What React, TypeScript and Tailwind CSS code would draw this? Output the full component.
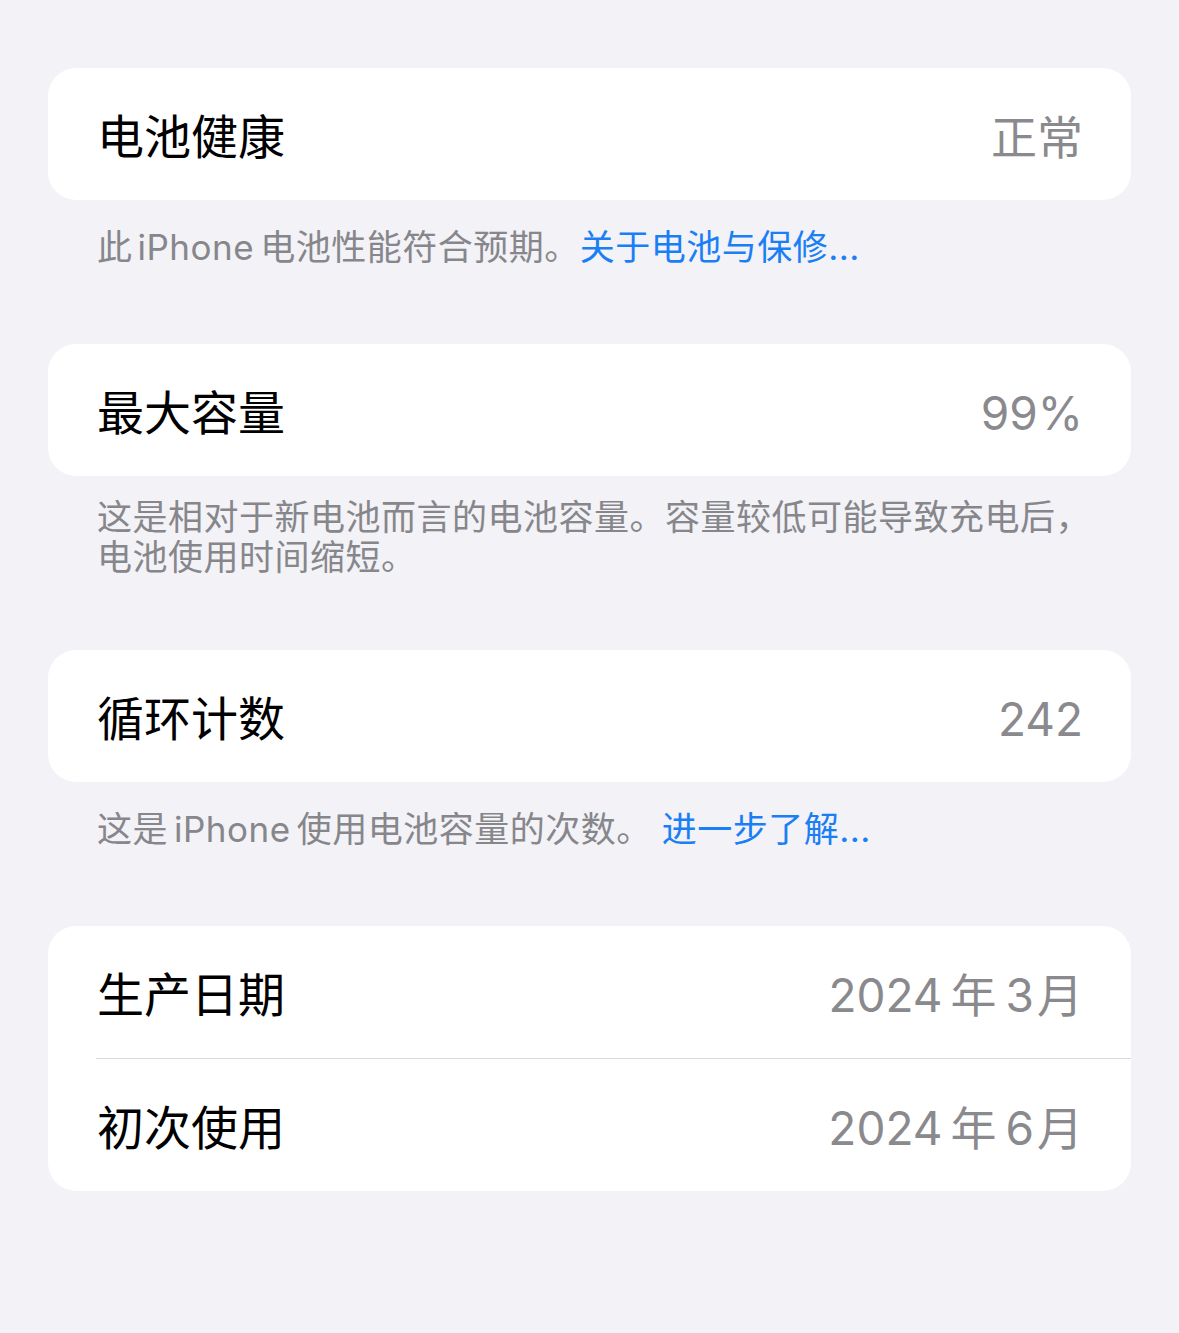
const font = { fontFamily: '"Inter", "Noto Sans CJK SC", sans-serif' };

function Row({ label, value }: { label: React.ReactNode; value: React.ReactNode }) {
  return (
    <div className="flex h-[132px] items-center justify-between pl-[49px] pr-[48px] pt-[5px]">
      <span className="text-[47px] leading-none text-black">{label}</span>
      <span className="text-[46px] leading-none text-[#8a8a8e]">{value}</span>
    </div>
  );
}

function DateValue({ month }: { month: string }) {
  return (
    <span>
      2024<span className="ml-[8px]">年</span>
      <span className="ml-[9px]">{month}</span>
      <span className="ml-[3px]">月</span>
    </span>
  );
}

export default function App() {
  return (
    <div className="min-h-[1333px] bg-[#f2f2f7] px-[48px] pt-[68px]" style={font}>
      <div className="rounded-[28px] bg-white">
        <Row label="电池健康" value="正常" />
      </div>
      <p className="pl-[49px] pt-[27px] text-[35px] leading-[40px] tracking-[0.5px] text-[#86868b]">
        此<span className="ml-[5px]">iPhone</span>
        <span className="ml-[6px]">电池性能符合预期。</span>
        <span className="text-[#1a7ef5]">关于电池与保修...</span>
      </p>

      <div className="mt-[77px] rounded-[28px] bg-white">
        <Row label="最大容量" value="99%" />
      </div>
      <p className="pl-[49px] pt-[21px] text-[35px] leading-[40px] tracking-[0.5px] text-[#86868b]">
        这是相对于新电池而言的电池容量。容量较低可能导致充电后，
        <br />
        电池使用时间缩短。
      </p>

      <div className="mt-[73px] rounded-[28px] bg-white">
        <Row label="循环计数" value="242" />
      </div>
      <p className="pl-[49px] pt-[27px] text-[35px] leading-[40px] tracking-[0.5px] text-[#86868b]">
        这是<span className="ml-[6px]">iPhone</span>
        <span className="ml-[6px]">使用电池容量的次数。</span>
        <span className="ml-[10px] text-[#1a7ef5]">进一步了解...</span>
      </p>

      <div className="mt-[77px] rounded-[28px] bg-white">
        <Row label="生产日期" value={<DateValue month="3" />} />
        <div className="ml-[48px] h-px bg-[#d9d9dd]" />
        <Row label="初次使用" value={<DateValue month="6" />} />
      </div>
    </div>
  );
}
